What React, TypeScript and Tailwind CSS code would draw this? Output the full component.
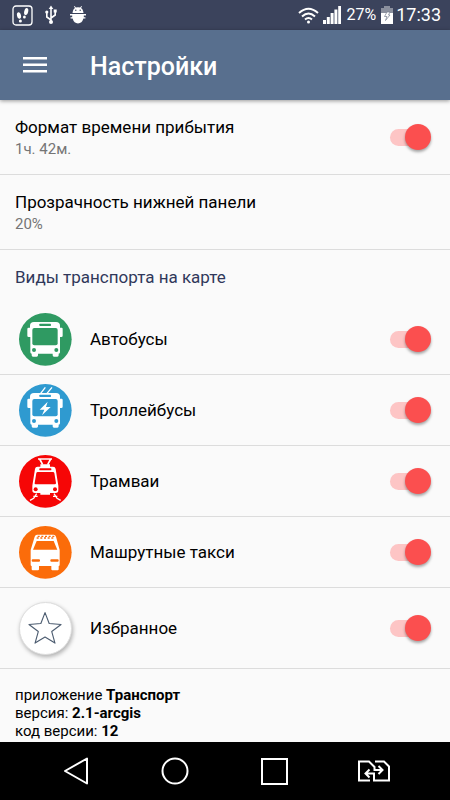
import { useState } from "react";
import type { ReactNode } from "react";

function Toggle({ id, label }: { id: string; label: string }) {
  const [on, setOn] = useState(true);
  return (
    <label htmlFor={id} className="relative flex h-[26px] w-[41px] shrink-0 cursor-pointer items-center">
      <input
        id={id}
        type="checkbox"
        role="switch"
        aria-label={label}
        checked={on}
        onChange={(e) => setOn(e.target.checked)}
        className="peer absolute inset-0 m-0 cursor-pointer appearance-none opacity-0"
      />
      <span className="h-[17px] w-9 rounded-full bg-gray-300 peer-checked:bg-[#fdc5c5]" />
      <span className="absolute left-0 size-[26px] rounded-full bg-gray-100 shadow-[0_2px_3px_rgba(0,0,0,0.35)] peer-checked:left-[15px] peer-checked:bg-[#fb4f4f]" />
    </label>
  );
}

function Disc({ color, children }: { color: string; children: ReactNode }) {
  return (
    <svg viewBox="0 0 159 159" className="size-[53px]" aria-hidden="true">
      <circle cx="79" cy="79" r="79" fill={color} />
      {children}
    </svg>
  );
}

function BusFront({ color }: { color: string }) {
  return (
    <>
      <path
        fill="#fff"
        d="M33 38Q33 27 45 27H111Q123 27 123 38V44H128Q131 44 131 48V68Q131 72 127 72H123V118Q123 122 119 122V127Q119 131 115 131H105Q101 131 101 127V122H57V127Q57 131 53 131H42Q38 131 38 127V122Q34 122 34 118V72H29Q25 72 25 68V48Q25 44 29 44H33Z"
      />
      <rect x="61" y="32" width="35" height="7" rx="2" fill={color} />
      <rect x="40" y="45" width="76" height="52" rx="6" fill={color} />
      <circle cx="45" cy="111" r="6" fill={color} />
      <circle cx="112" cy="111" r="6" fill={color} />
    </>
  );
}

function BusIcon() {
  return (
    <Disc color="#2f9a62">
      <BusFront color="#2f9a62" />
    </Disc>
  );
}

function TrolleyIcon() {
  return (
    <Disc color="#2f9ad0">
      <path d="M65 28L79 10M84 28L99 10" stroke="#fff" strokeWidth="4" />
      <BusFront color="#2f9ad0" />
      <path fill="#fff" d="M86 53L62 77H76L69 94L95 69H81Z" />
    </Disc>
  );
}

function TramIcon() {
  return (
    <Disc color="#f60606">
      <path d="M57 12H99M62 12L71 29M95 12L86 29" stroke="#fff" strokeWidth="5" fill="none" />
      <path
        fill="#fff"
        d="M64 28H93V35H102Q109 35 110 42L118 92V106Q118 114 110 114H93V119H64V114H48Q40 114 40 106V92L48 42Q49 35 56 35H64Z"
      />
      <rect x="61" y="40" width="36" height="6" rx="2" fill="#f60606" />
      <path fill="#f60606" d="M56 51H102Q105 51 106 54L111 84Q111 88 107 88H50Q46 88 47 84L52 54Q53 51 56 51Z" />
      <circle cx="50" cy="103" r="6" fill="#f60606" />
      <circle cx="108" cy="103" r="6" fill="#f60606" />
      <path d="M53 116L44 130L33 136M105 116L114 130L125 136M43 124H56M115 124H102" stroke="#fff" strokeWidth="4" fill="none" />
    </Disc>
  );
}

function TaxiIcon() {
  return (
    <Disc color="#fb6c0a">
      <path
        fill="#fff"
        d="M54 26H104Q109 26 111 32L122 72V116Q122 120 119 120V130Q119 133 116 133H100Q97 133 97 130V120H60V130Q60 133 57 133H41Q38 133 38 130V120Q35 120 35 116V72L47 32Q49 26 54 26Z"
      />
      <path fill="#fb6c0a" d="M53 45H104L115 71H42Z" />
      <path
        d="M56 31H62M67 31H73M78 31H84M89 31H95M100 31H106M53 36H59M64 36H70M75 36H81M86 36H92M97 36H103"
        stroke="#fb6c0a"
        strokeWidth="4"
      />
      <rect x="38" y="100" width="25" height="7" rx="3" fill="#fb6c0a" />
      <rect x="94" y="100" width="25" height="7" rx="3" fill="#fb6c0a" />
    </Disc>
  );
}

function FavoriteIcon() {
  return (
    <span className="flex size-[53px] rounded-full border border-[#dedede] bg-white shadow-[1px_2px_4px_rgba(0,0,0,0.3)]">
      <svg viewBox="0 0 159 159" className="size-full" aria-hidden="true">
        <path
          d="M78 30L91 64L128 67L99 89L109 125L78 106L47 125L57 89L28 67L65 64Z"
          fill="none"
          stroke="#4c5c70"
          strokeWidth="3.5"
          strokeLinejoin="round"
        />
      </svg>
    </span>
  );
}

const transports = [
  { id: "bus", label: "Автобусы", icon: <BusIcon /> },
  { id: "trolley", label: "Троллейбусы", icon: <TrolleyIcon /> },
  { id: "tram", label: "Трамваи", icon: <TramIcon /> },
  { id: "taxi", label: "Машрутные такси", icon: <TaxiIcon /> },
];

function TransportRow({ id, label, icon, className }: { id: string; label: string; icon: ReactNode; className: string }) {
  return (
    <li className={`flex items-center border-b border-[#dcdcdc] pr-[19px] pl-[19px] ${className}`}>
      {icon}
      <span className="ml-[18px] flex-1">{label}</span>
      <Toggle id={id} label={label} />
    </li>
  );
}

function StatusBar() {
  return (
    <div className="flex h-[30px] shrink-0 items-center bg-[#3b435c] pr-[9px] pl-3 text-white">
      <svg viewBox="0 0 21 21" className="size-[21px]" aria-hidden="true">
        <rect x="1" y="1" width="19" height="19" rx="3" fill="none" stroke="#fff" strokeWidth="1.3" />
        <g fill="#fff">
          <ellipse cx="7" cy="10.5" rx="2" ry="3.4" transform="rotate(-12 7 10.5)" />
          <ellipse cx="8.4" cy="16" rx="1.5" ry="1.6" />
          <ellipse cx="14.2" cy="6.6" rx="2" ry="3.6" transform="rotate(12 14.2 6.6)" />
          <ellipse cx="12.4" cy="12" rx="1.4" ry="1.6" />
        </g>
      </svg>
      <svg viewBox="0 0 12 20" className="ml-3 h-5 w-3" fill="none" stroke="#fff" strokeWidth="1.6" aria-hidden="true">
        <path d="M6 17V3M6 15L1.8 12V7M6 13L10.2 10V6" />
        <path d="M6 0.5L8.3 4H3.7Z" fill="#fff" stroke="none" />
        <circle cx="6" cy="17" r="2" fill="#fff" stroke="none" />
        <circle cx="1.8" cy="7" r="1.6" fill="#fff" stroke="none" />
        <rect x="8.7" y="4.5" width="3" height="3" fill="#fff" stroke="none" />
      </svg>
      <svg viewBox="0 0 16 18" className="ml-[13px] h-[18px] w-4" fill="#fff" aria-hidden="true">
        <path d="M2.5 7Q3 3 5 2L4 0.4L4.7 0L5.800 1.500Q8 0.8 10.2 1.5L11.3 0L12 0.4L11 2Q13 3 13.5 7Z" />
        <path d="M0 8H16V9.4H13.8V11.2H15.4V12.6H13.4Q12 17.5 8 17.5T2.6 12.600H0.6V11.2H2.2V9.400H0Z" />
        <circle cx="5.8" cy="4.2" r="0.7" fill="#3b435c" />
        <circle cx="10.2" cy="4.2" r="0.7" fill="#3b435c" />
      </svg>
      <div className="flex-1" />
      <svg viewBox="0 0 21 17" className="h-[17px] w-[21px]" fill="none" stroke="#fff" strokeWidth="2" aria-hidden="true">
        <path d="M1 6Q10.5 -2.5 20 6M4 9.5Q10.5 3.5 17 9.5M7 12.6Q10.5 9.5 14 12.6" />
        <circle cx="10.5" cy="15" r="1.5" fill="#fff" stroke="none" />
      </svg>
      <svg viewBox="0 0 18 18" className="ml-1 size-[18px]" fill="#fff" aria-hidden="true">
        <path d="M0 14H3V18H0ZM3.8 11H6.8V18H3.8ZM7.6 7H10.6V18H7.6ZM11.4 3.5H14.4V18H11.4ZM15.2 0H18V18H15.2Z" />
      </svg>
      <span className="ml-[5px] text-base leading-5">27%</span>
      <svg viewBox="0 0 12 18" className="ml-[5px] h-[18px] w-3" aria-hidden="true">
        <path d="M3 0H9V2H12V8H0V2H3Z" fill="#8a8f9d" />
        <path d="M0 7H12V18H0Z" fill="#fff" />
        <path d="M6 6H9L7.5 9H9L4.5 14.5L6 10.5H3.5Z" fill="#fff" stroke="#747b8c" strokeWidth="0.7" />
      </svg>
      <span className="ml-[3px] text-lg leading-5">17:33</span>
    </div>
  );
}

function NavBar() {
  const button = "flex h-full flex-1 items-center justify-center";
  return (
    <nav className="flex h-[58px] shrink-0 bg-black px-[26px]" aria-label="Системная навигация">
      <button type="button" aria-label="Назад" className={button}>
        <svg viewBox="0 0 28 28" className="size-7" fill="none" stroke="#fff" strokeWidth="2">
          <path d="M3 14L25 1.5V26.5Z" strokeLinejoin="round" />
        </svg>
      </button>
      <button type="button" aria-label="Домой" className={button}>
        <svg viewBox="0 0 28 28" className="size-7" fill="none" stroke="#fff" strokeWidth="2">
          <circle cx="14" cy="14" r="12.5" />
        </svg>
      </button>
      <button type="button" aria-label="Недавние" className={button}>
        <svg viewBox="0 0 28 28" className="size-7" fill="none" stroke="#fff" strokeWidth="2">
          <rect x="1" y="2" width="25" height="25" />
        </svg>
      </button>
      <button type="button" aria-label="Сменить SIM" className={button}>
        <svg viewBox="0 0 34 22" className="h-[22px] w-[34px]" fill="none" stroke="#fff" strokeWidth="2">
          <path d="M13 20.5H2V1.5H12L17.5 7V10H25M21.5 6L25.5 10L21.5 14" />
          <path d="M18 1.5H27L32 6.5V20.5H17V13.5H9M12.5 9.5L8.5 13.5L12.5 17.5" />
        </svg>
      </button>
    </nav>
  );
}

export default function App() {
  return (
    <div className="flex h-screen flex-col bg-[#fafafa] font-['Roboto',sans-serif] text-[17px] leading-[22px] text-black">
      <StatusBar />
      <header className="z-10 flex h-[70px] shrink-0 items-center bg-[#586f8e] pl-[23px] text-white shadow-[0_1px_4px_rgba(0,0,0,0.4)]">
        <button type="button" aria-label="Меню" className="flex h-10 w-6 items-center">
          <svg viewBox="0 0 24 16" className="h-4 w-6" fill="#fff">
            <path d="M0 0H24V2.5H0ZM0 6.5H24V9H0ZM0 13H24V15.5H0Z" />
          </svg>
        </button>
        <h1 className="ml-[43px] pt-1 text-[25px] leading-8 font-medium">Настройки</h1>
      </header>
      <main className="min-h-0 flex-1 overflow-hidden">
        <section className="flex h-[75px] items-center border-b border-[#dcdcdc] pr-[19px] pl-[15px]">
          <div className="flex-1 pt-0.5">
            <p>Формат времени прибытия</p>
            <p className="text-[15px] text-[#757575]">1ч. 42м.</p>
          </div>
          <Toggle id="time-format" label="Формат времени прибытия" />
        </section>
        <section className="flex h-[75px] items-center border-b border-[#dcdcdc] px-[15px]">
          <div className="pt-0.5">
            <p>Прозрачность нижней панели</p>
            <p className="text-[15px] text-[#757575]">20%</p>
          </div>
        </section>
        <h2 className="px-[15px] py-4 text-[#30385a]">Виды транспорта на карте</h2>
        <ul>
          {transports.map((t) => (
            <TransportRow key={t.id} {...t} className="h-[71px]" />
          ))}
          <TransportRow id="favorites" label="Избранное" icon={<FavoriteIcon />} className="h-[81px]" />
        </ul>
        <footer className="px-[15px] pt-[17px] text-[15px] leading-[18px]">
          <p>
            приложение <b>Транспорт</b>
          </p>
          <p>
            версия: <b>2.1-arcgis</b>
          </p>
          <p>
            код версии: <b>12</b>
          </p>
        </footer>
      </main>
      <NavBar />
    </div>
  );
}
